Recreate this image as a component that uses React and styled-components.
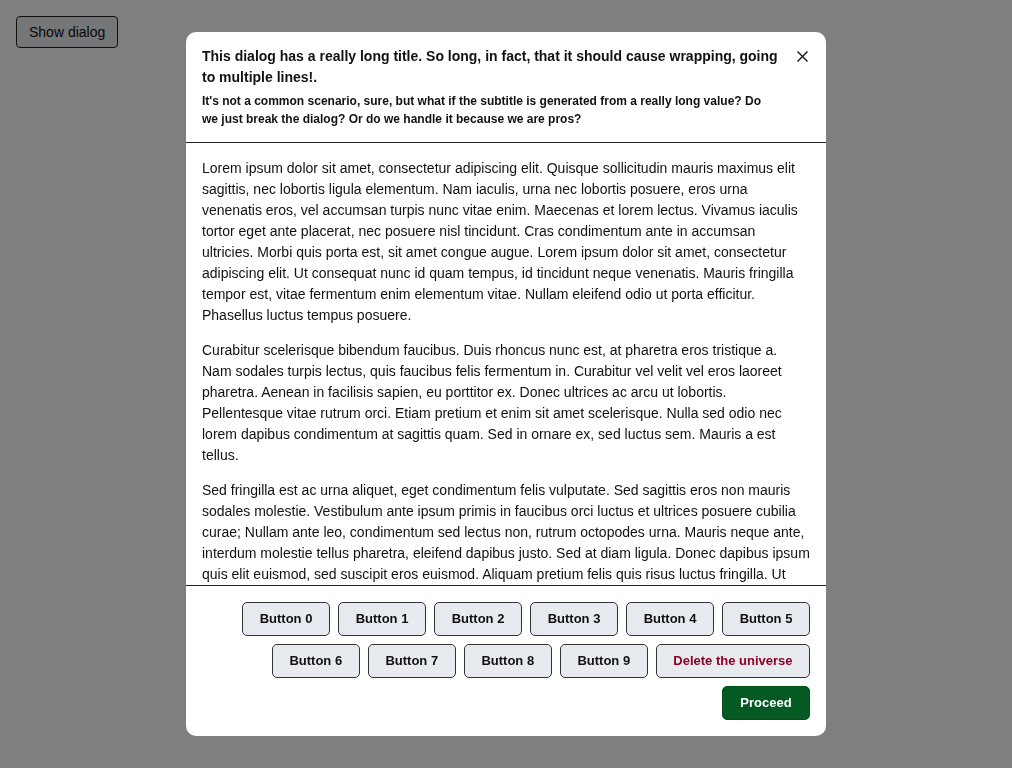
import React from "react";
import styled, { createGlobalStyle } from "styled-components";

const GlobalStyle = createGlobalStyle`
  html, body {
    margin: 0;
    height: 100%;
  }
  body {
    font-family: "Liberation Sans", Arial, sans-serif;
    background: #fff;
  }
`;

const Page = styled.div`
  padding: 16px;
  min-height: 100vh;
  box-sizing: border-box;
`;

const ShowButton = styled.button`
  font-family: "Liberation Sans", Arial, sans-serif;
  font-size: 14px;
  color: #111;
  background: #e9ecf0;
  border: 1px solid #222;
  border-radius: 4px;
  height: 32px;
  padding: 0 12px;
`;

const Overlay = styled.div`
  position: fixed;
  inset: 0;
  background: rgba(0, 0, 0, 0.5);
  display: flex;
  justify-content: center;
  align-items: flex-start;
  padding: 32px 0;
  box-sizing: border-box;
`;

const Dialog = styled.div`
  width: 640px;
  max-height: calc(100vh - 64px);
  background: #fff;
  border-radius: 10px;
  display: flex;
  flex-direction: column;
  overflow: hidden;
  color: #111;
`;

const Header = styled.div`
  display: flex;
  align-items: flex-start;
  gap: 8px;
  padding: 14px 16px;
  border-bottom: 1px solid #222;
`;

const Titles = styled.div`
  flex: 1;
  display: flex;
  flex-direction: column;
  gap: 4px;
`;

const Title = styled.h2`
  margin: 0;
  font-weight: bold;
  font-size: 14px;
  line-height: 21px;
`;

const Subtitle = styled.p`
  margin: 0;
  font-weight: bold;
  font-size: 12px;
  line-height: 18px;
  padding-right: 18px;
`;

const CloseButton = styled.button`
  border: none;
  background: none;
  padding: 0;
  width: 16px;
  height: 16px;
  margin-top: 2px;
  display: flex;
  align-items: center;
  justify-content: center;
  color: #222;
`;

const Body = styled.div`
  flex: 1;
  overflow-y: auto;
  padding: 15px 16px 16px;
  font-size: 14px;
  line-height: 21px;
  scrollbar-width: none;

  p {
    margin: 0 0 14px;
  }
`;

const Footer = styled.div`
  display: flex;
  flex-wrap: wrap;
  justify-content: flex-end;
  gap: 8px;
  padding: 16px;
  border-top: 1px solid #222;
`;

const Button = styled.button`
  font-family: "Liberation Sans", Arial, sans-serif;
  font-weight: bold;
  font-size: 13px;
  height: 34px;
  min-width: 88px;
  padding: 0 16.5px 1px;
  border-radius: 5px;
  border: 1px solid ${(p) => (p.$primary ? "#03511d" : "#333")};
  background: ${(p) => (p.$primary ? "#045a22" : "#e7ebef")};
  color: ${(p) => (p.$danger ? "#8a0224" : p.$primary ? "#fff" : "#111")};
`;

const paragraphs = [
  "Lorem ipsum dolor sit amet, consectetur adipiscing elit. Quisque sollicitudin mauris maximus elit sagittis, nec lobortis ligula elementum. Nam iaculis, urna nec lobortis posuere, eros urna venenatis eros, vel accumsan turpis nunc vitae enim. Maecenas et lorem lectus. Vivamus iaculis tortor eget ante placerat, nec posuere nisl tincidunt. Cras condimentum ante in accumsan ultricies. Morbi quis porta est, sit amet congue augue. Lorem ipsum dolor sit amet, consectetur adipiscing elit. Ut consequat nunc id quam tempus, id tincidunt neque venenatis. Mauris fringilla tempor est, vitae fermentum enim elementum vitae. Nullam eleifend odio ut porta efficitur. Phasellus luctus tempus posuere.",
  "Curabitur scelerisque bibendum faucibus. Duis rhoncus nunc est, at pharetra eros tristique a. Nam sodales turpis lectus, quis faucibus felis fermentum in. Curabitur vel velit vel eros laoreet pharetra. Aenean in facilisis sapien, eu porttitor ex. Donec ultrices ac arcu ut lobortis. Pellentesque vitae rutrum orci. Etiam pretium et enim sit amet scelerisque. Nulla sed odio nec lorem dapibus condimentum at sagittis quam. Sed in ornare ex, sed luctus sem. Mauris a est tellus.",
  "Sed fringilla est ac urna aliquet, eget condimentum felis vulputate. Sed sagittis eros non mauris sodales molestie. Vestibulum ante ipsum primis in faucibus orci luctus et ultrices posuere cubilia curae; Nullam ante leo, condimentum sed lectus non, rutrum octopodes urna. Mauris neque ante, interdum molestie tellus pharetra, eleifend dapibus justo. Sed at diam ligula. Donec dapibus ipsum quis elit euismod, sed suscipit eros euismod. Aliquam pretium felis quis risus luctus fringilla. Ut vehicula sapien sit amet nibh tincidunt, in pulvinar lorem commodo. Integer finibus ex at magna iaculis, non porta nisl tempor.",
];

const CloseIcon = () => (
  <svg width="11" height="11" viewBox="0 0 11 11">
    <path d="M1 1L10 10M10 1L1 10" stroke="currentColor" strokeWidth="1.5" strokeLinecap="square" />
  </svg>
);

export default function App() {
  return (
    <>
      <GlobalStyle />
      <Page>
        <ShowButton>Show dialog</ShowButton>
      </Page>
      <Overlay>
        <Dialog role="dialog">
          <Header>
            <Titles>
              <Title>
                This dialog has a really long title. So long, in fact, that it should cause wrapping, going to multiple lines!.
              </Title>
              <Subtitle>
                It's not a common scenario, sure, but what if the subtitle is generated from a really long value? Do we just break the dialog? Or do we handle it because we are pros?
              </Subtitle>
            </Titles>
            <CloseButton aria-label="Close">
              <CloseIcon />
            </CloseButton>
          </Header>
          <Body>
            {paragraphs.map((t, i) => (
              <p key={i}>{t}</p>
            ))}
          </Body>
          <Footer>
            {Array.from({ length: 10 }, (_, i) => (
              <Button key={i}>Button {i}</Button>
            ))}
            <Button $danger>Delete the universe</Button>
            <Button $primary>Proceed</Button>
          </Footer>
        </Dialog>
      </Overlay>
    </>
  );
}
